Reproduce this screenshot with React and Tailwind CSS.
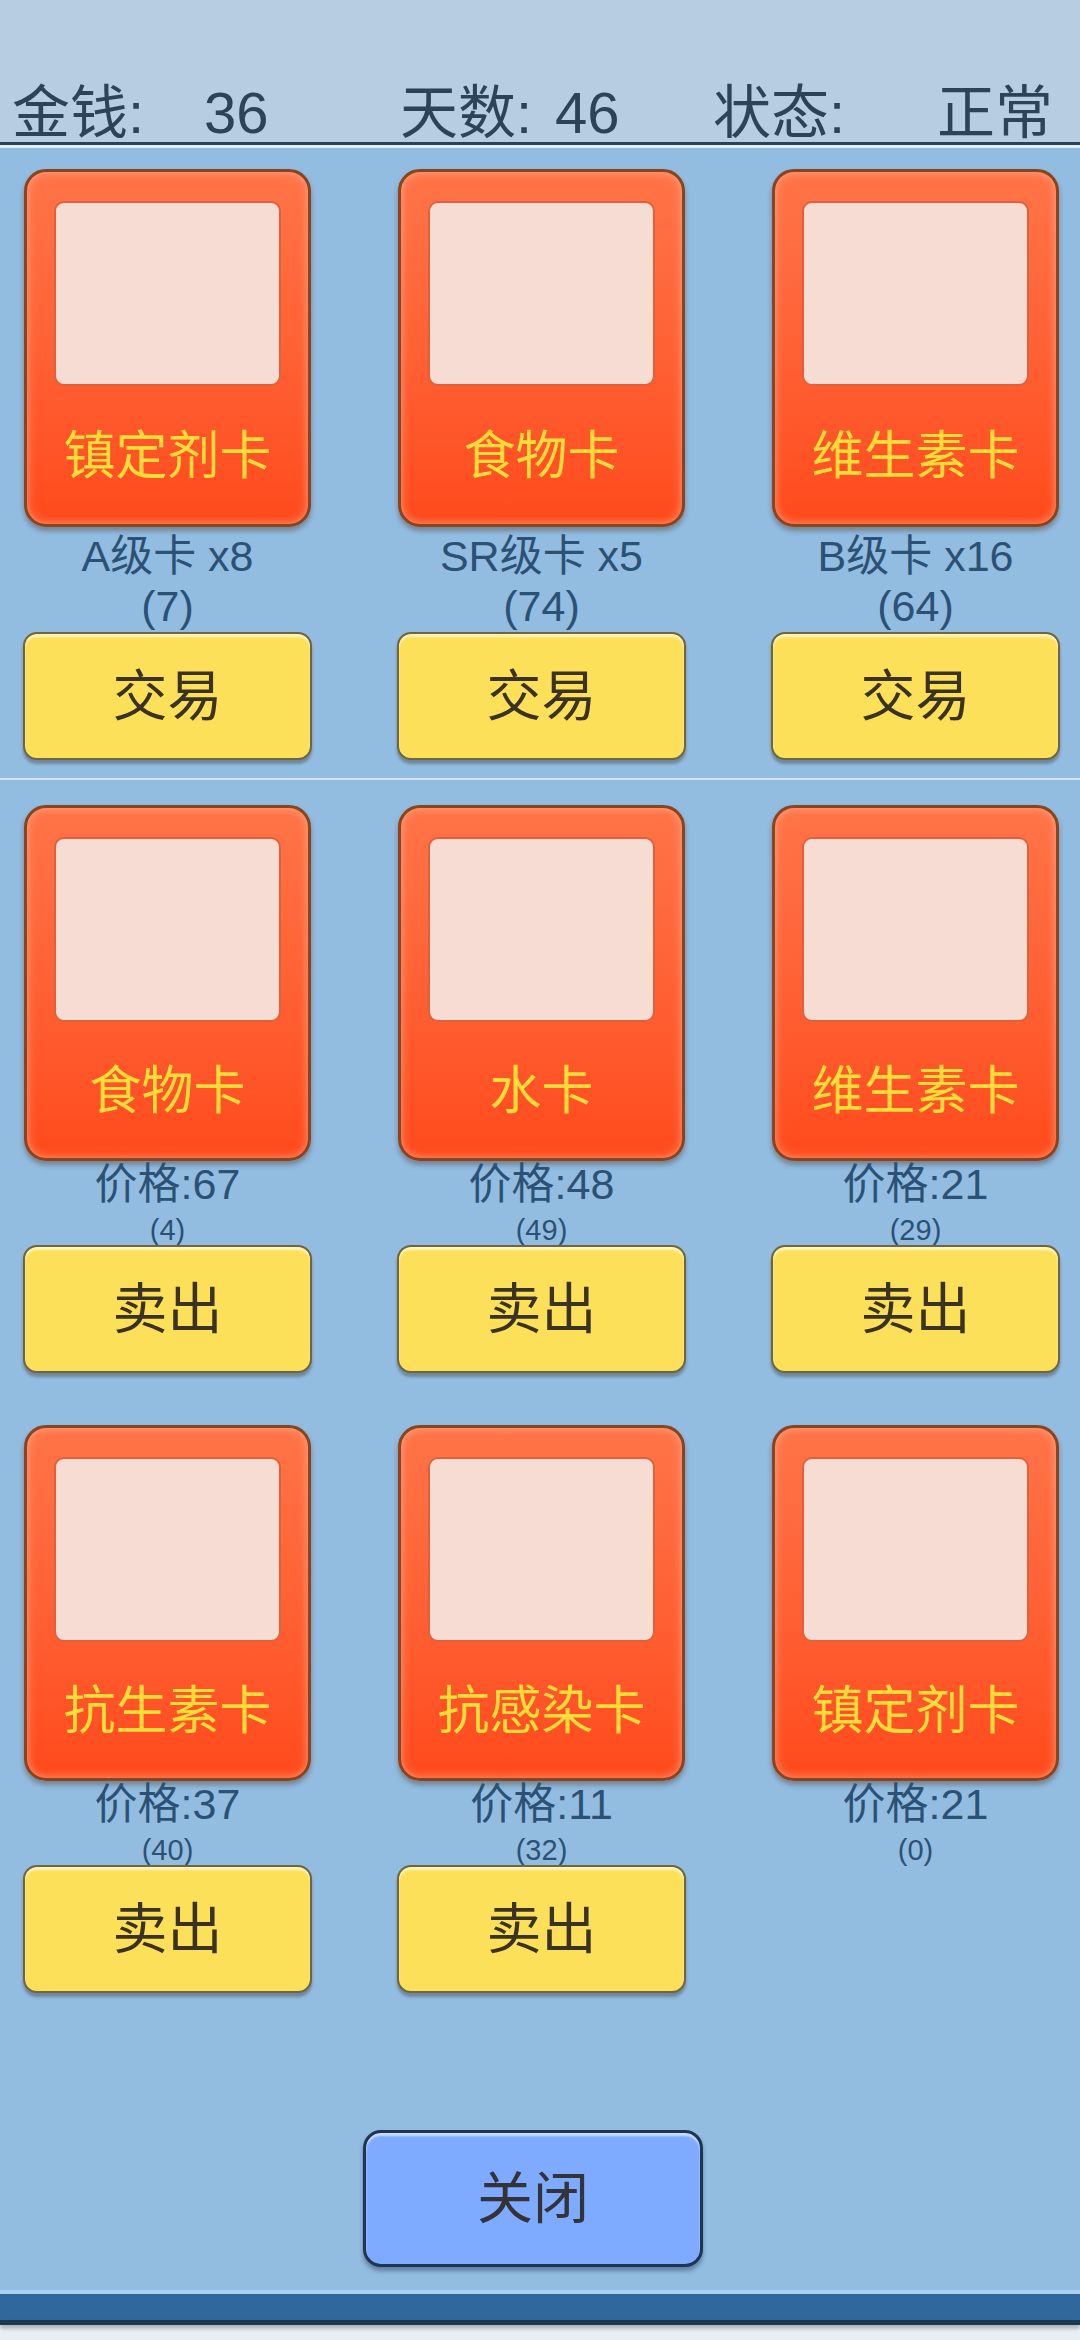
import React from 'react';

const font = { fontFamily: '"Liberation Sans", "Noto Sans CJK SC", sans-serif' };

const tradeRow = [
  { name: '镇定剂卡', line1: 'A级卡 x8', line2: '(7)' },
  { name: '食物卡', line1: 'SR级卡 x5', line2: '(74)' },
  { name: '维生素卡', line1: 'B级卡 x16', line2: '(64)' },
];

const sellRows = [
  [
    { name: '食物卡', price: 67, count: 4, sell: true },
    { name: '水卡', price: 48, count: 49, sell: true },
    { name: '维生素卡', price: 21, count: 29, sell: true },
  ],
  [
    { name: '抗生素卡', price: 37, count: 40, sell: true },
    { name: '抗感染卡', price: 11, count: 32, sell: true },
    { name: '镇定剂卡', price: 21, count: 0, sell: false },
  ],
];

function Card({ name, tall }) {
  return (
    <div
      className={`w-[287px] ${tall ? 'h-[358px]' : 'h-[356px]'} rounded-[22px] border-[3px] border-[#86461f] bg-linear-to-b from-[#ff7448] to-[#ff4a1b] shadow-[inset_0_0_10px_rgba(255,190,160,0.7),0_4px_5px_rgba(60,30,10,0.35)] flex flex-col items-center pt-[29px]`}
    >
      <div className="w-[227px] h-[185px] shrink-0 rounded-[10px] border-2 border-[#e0603a] bg-[#f7dcd3]" />
      <div className="flex-1 flex items-center justify-center pt-[2px] text-[52px] leading-none text-[#ffdc3a]">
        {name}
      </div>
    </div>
  );
}

function YellowButton({ label }) {
  return (
    <button className="w-[289px] h-[128px] rounded-[14px] border-2 border-[#6f6541] bg-[#fde05a] shadow-[inset_0_3px_2px_rgba(255,250,210,0.8),0_4px_3px_rgba(40,40,30,0.35)] text-[55px] leading-none text-[#3a3222]">
      {label}
    </button>
  );
}

export default function App() {
  return (
    <div className="w-[1080px] h-[2340px] flex flex-col bg-[#e8eef2] overflow-hidden" style={font}>
      {/* top status bar */}
      <div className="h-[142px] bg-[#b7cde1] flex items-end text-[58px] leading-[58px] text-[#2b4556]">
        <div className="flex">
          <span className="ml-[12px] w-[192px]">金钱:</span>
          <span className="w-[196px]">36</span>
          <span className="w-[155px]">天数:</span>
          <span className="w-[158px]">46</span>
          <span className="w-[224px]">状态:</span>
          <span>正常</span>
        </div>
      </div>
      <div className="h-[3px] bg-[#2a4252]" />
      <div className="h-[3px] bg-[#e2edf8]" />

      <div className="h-[2142px] bg-[#93bce1] pt-[21px] flex flex-col">
        {/* owned cards, trade */}
        <div className="grid grid-cols-[289px_289px_289px] gap-x-[85px] pl-[23px]">
          {tradeRow.map((c, i) => (
            <div key={i} className="flex flex-col items-center">
              <Card name={c.name} tall />
              <div className="h-[105px] pt-[4px] flex flex-col items-center text-[43px] leading-[50px] text-[#2b5275]">
                <span>{c.line1}</span>
                <span>{c.line2}</span>
              </div>
              <YellowButton label="交易" />
            </div>
          ))}
        </div>

        <div className="mt-[18px] h-[2px] bg-[#cfe0f0]" />

        {sellRows.map((row, r) => (
          <div
            key={r}
            className={`grid grid-cols-[289px_289px_289px] gap-x-[85px] pl-[23px] ${r === 0 ? 'mt-[25px]' : 'mt-[52px]'}`}
          >
            {row.map((c, i) => (
              <div key={i} className="flex flex-col items-center">
                <Card name={c.name} />
                <div className="h-[84px] flex flex-col items-center text-[#2b5275]">
                  <span className="text-[43px] leading-[46px]">价格:{c.price}</span>
                  <span className="mt-[9px] text-[29px] leading-[29px]">({c.count})</span>
                </div>
                {c.sell && <YellowButton label="卖出" />}
              </div>
            ))}
          </div>
        ))}

        <button className="mt-[137px] ml-[363px] w-[340px] h-[137px] rounded-[18px] border-[3px] border-[#1f3552] bg-[#7eaaff] shadow-[inset_0_3px_2px_rgba(220,235,255,0.8),0_4px_4px_rgba(20,40,70,0.4)] text-[56px] leading-none text-[#333338]">
          关闭
        </button>
      </div>

      <div className="h-[4px] bg-[#aed0f0]" />
      <div className="h-[26px] bg-[#31689b]" />
      <div className="h-[5px] bg-[#1d3850] shadow-[0_3px_4px_rgba(0,0,0,0.3)]" />
    </div>
  );
}
